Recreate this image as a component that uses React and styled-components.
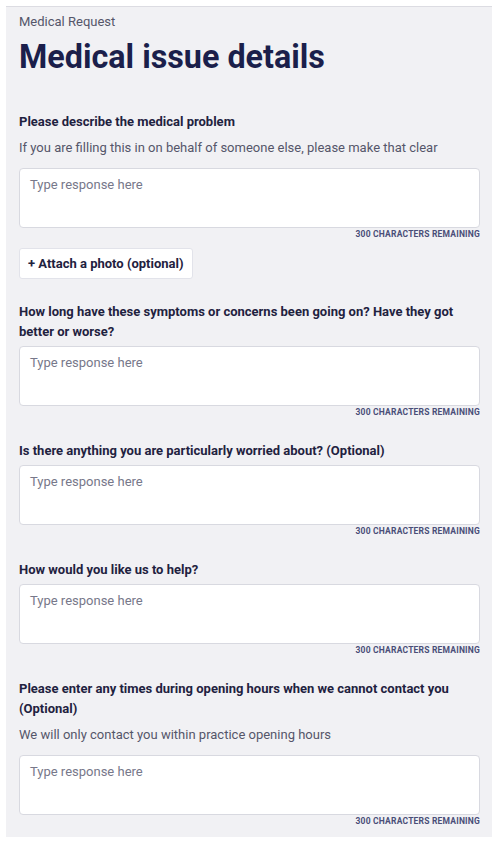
import React from 'react';
import styled, { createGlobalStyle } from 'styled-components';

const GlobalStyle = createGlobalStyle`
  body {
    margin: 0;
    background: #ffffff;
    font-family: Roboto, "Liberation Sans", Arial, sans-serif;
  }
`;

const Page = styled.div`
  padding: 6px 7px 7px 6px;
`;

const Panel = styled.div`
  background: #f1f1f4;
  border-top: 1px solid #dcdce2;
  padding: 6px 12px 10px 13px;
  display: flex;
  flex-direction: column;
`;

const Breadcrumb = styled.div`
  font-size: 13px;
  line-height: 18px;
  color: #55566a;
`;

const Title = styled.h1`
  margin: 6px 0 35px;
  font-size: 32.3px;
  line-height: 40px;
  font-weight: 700;
  color: #1b1f4b;
`;

const Question = styled.section`
  display: flex;
  flex-direction: column;
  margin-bottom: 23px;
  &:last-child {
    margin-bottom: 0;
  }
`;

const Label = styled.label`
  font-size: 13px;
  line-height: 20px;
  font-weight: 700;
  color: #1f2240;
`;

const Hint = styled.p`
  margin: 6px 0 0;
  font-size: 13px;
  line-height: 20px;
  color: #55566a;
`;

const Field = styled.textarea`
  box-sizing: border-box;
  margin-top: ${(p) => (p.$afterHint ? '10px' : '4px')};
  width: 100%;
  height: 60px;
  padding: 7px 10px;
  resize: none;
  border: 1px solid #d8d9e0;
  border-radius: 4px;
  background: #fff;
  font-family: inherit;
  font-size: 13px;
  line-height: 18px;
  color: #1f2240;
  &::placeholder {
    color: #77788a;
  }
`;

const Counter = styled.div`
  margin-top: 1px;
  text-align: right;
  font-size: 8.5px;
  line-height: 11px;
  font-weight: 700;
  letter-spacing: 0.2px;
  color: #4a4e78;
`;

const AttachButton = styled.button`
  align-self: flex-start;
  margin-top: 8px;
  height: 31px;
  padding: 0 8px;
  background: #fff;
  border: 1px solid #e2e3ea;
  border-radius: 3px;
  font-family: inherit;
  font-size: 13px;
  font-weight: 700;
  color: #1f2240;
  cursor: pointer;
`;

const questions = [
  {
    label: 'Please describe the medical problem',
    hint: 'If you are filling this in on behalf of someone else, please make that clear',
    attach: true,
  },
  { label: 'How long have these symptoms or concerns been going on? Have they got better or worse?' },
  { label: 'Is there anything you are particularly worried about? (Optional)' },
  { label: 'How would you like us to help?' },
  {
    label: 'Please enter any times during opening hours when we cannot contact you (Optional)',
    hint: 'We will only contact you within practice opening hours',
  },
];

const App = () => {
  return (
    <Page>
      <GlobalStyle />
      <Panel>
        <Breadcrumb>Medical Request</Breadcrumb>
        <Title>Medical issue details</Title>
        {questions.map((q, i) => (
          <Question key={i}>
            <Label>{q.label}</Label>
            {q.hint && <Hint>{q.hint}</Hint>}
            <Field $afterHint={!!q.hint} placeholder="Type response here" />
            <Counter>300 CHARACTERS REMAINING</Counter>
            {q.attach && <AttachButton>+ Attach a photo (optional)</AttachButton>}
          </Question>
        ))}
      </Panel>
    </Page>
  );
};

export default App;
